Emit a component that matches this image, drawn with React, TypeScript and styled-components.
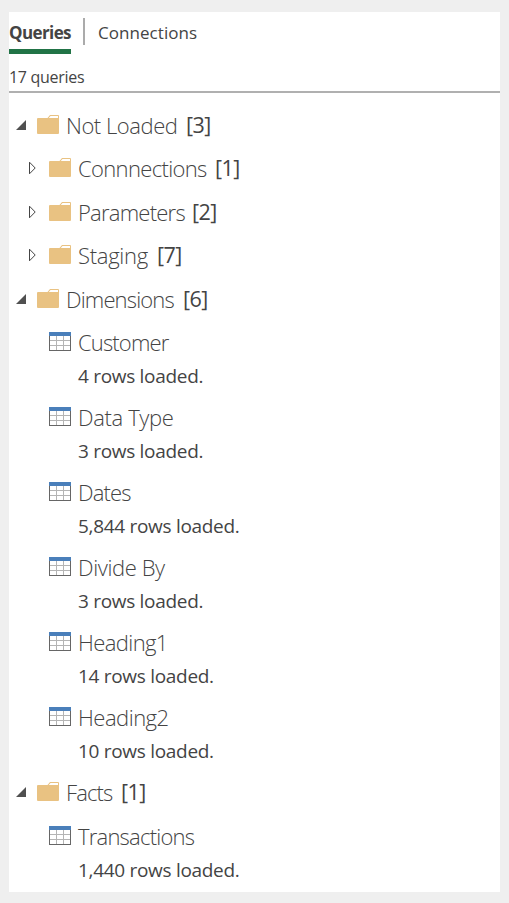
import React from "react";
import styled, { createGlobalStyle } from "styled-components";

const GlobalStyle = createGlobalStyle`
  * { box-sizing: border-box; }
  body {
    margin: 0;
    background: #efefef;
    color: #444;
    font-family: "Open Sans", "Noto Sans", sans-serif;
  }
`;

const Page = styled.div`
  height: 903px;
  padding: 12px 9px 11px;
`;

const Panel = styled.main`
  height: 880px;
  background: #fff;
`;

const Tabs = styled.nav`
  display: flex;
  height: 42px;
`;

const Tab = styled.div<{ $active?: boolean; $track: number }>`
  height: 42px;
  padding-top: 9px;
  font-size: 17px;
  line-height: 24px;
  white-space: nowrap;
  letter-spacing: ${(p) => p.$track}px;
  font-weight: ${(p) => (p.$active ? 700 : 400)};
  width: ${(p) => (p.$active ? "62px" : "auto")};
  border-bottom: ${(p) => (p.$active ? "5px solid #217346" : "0")};
`;

const Divider = styled.div`
  width: 2px;
  height: 27px;
  margin: 6px 13px 0 12px;
  background: #ababab;
`;

const Summary = styled.div`
  height: 39px;
  padding-top: 11px;
  border-bottom: 2px solid #b0b0b0;
  font-size: 16px;
  line-height: 24px;
  letter-spacing: -0.3px;
`;

const Tree = styled.div`
  padding-top: 11px;
`;

const Row = styled.div<{ $level: number; $height: number }>`
  display: flex;
  align-items: flex-start;
  height: ${(p) => p.$height}px;
  padding-left: ${(p) => 7 + p.$level * 12}px;
`;

const Toggle = styled.div`
  width: 21px;
  height: 32px;
  padding-top: 14px;
  svg { display: block; }
`;

const Icon = styled.div`
  width: 22px;
  margin: 11px 7px 0 0;
  svg { display: block; }
`;

const Title = styled.div`
  display: flex;
  height: 41px;
  line-height: 32px;
  padding-top: 5px;
  white-space: nowrap;
`;

const Name = styled.span<{ $width: number; $track: number }>`
  width: ${(p) => p.$width}px;
  font-size: 22px;
  font-weight: 300;
  letter-spacing: ${(p) => p.$track}px;
`;

const Count = styled.span`
  font-size: 21.5px;
  letter-spacing: -0.6px;
`;

const Status = styled.div`
  font-size: 19px;
  line-height: 28px;
  white-space: nowrap;
  letter-spacing: -0.3px;
`;

const Expanded = () => (
  <svg width="12" height="18" viewBox="0 0 12 18">
    <path d="M10 2V12H0Z" fill="#505050" />
  </svg>
);

const Collapsed = () => (
  <svg width="12" height="18" viewBox="0 0 12 18">
    <path d="M1.5 1.2V12.8L7.2 7Z" fill="#fff" stroke="#444" strokeWidth="1" />
  </svg>
);

const Folder = () => (
  <svg width="22" height="19" viewBox="0 0 22 19">
    <path d="M0 4Q0 3 1 3H10.5L13 0H21Q22 0 22 1V18Q22 19 21 19H1Q0 19 0 18Z" fill="#e9c282" />
    <path d="M11.7 3L13.5 1H21V3Z" fill="#fff" />
  </svg>
);

const Table = () => (
  <svg width="22" height="19" viewBox="0 0 22 19" shapeRendering="crispEdges">
    <path d="M7.5 4V18M14.5 4V18M1 8.5H21M1 13.5H21" stroke="#b4b4b4" fill="none" />
    <path d="M0 4H1V18H21V4H22V19H0Z" fill="#666" />
    <path d="M0 0H22V4H0Z" fill="#4a7fba" />
  </svg>
);

type Item = {
  name: string;
  width: number;
  track: number;
  level: number;
  height: number;
  count?: number;
  open?: boolean;
  status?: string;
};

const items: Item[] = [
  { name: "Not Loaded", width: 120, track: -0.45, level: 0, height: 43, count: 3, open: true },
  { name: "Connnections", width: 137, track: -0.66, level: 1, height: 44, count: 1 },
  { name: "Parameters", width: 114, track: -0.76, level: 1, height: 43, count: 2 },
  { name: "Staging", width: 79, track: -0.28, level: 1, height: 44, count: 7 },
  { name: "Dimensions", width: 117, track: -0.85, level: 0, height: 43, count: 6, open: true },
  { name: "Customer", width: 100, track: -0.85, level: 1, height: 75, status: "4 rows loaded." },
  { name: "Data Type", width: 100, track: -0.35, level: 1, height: 75, status: "3 rows loaded." },
  { name: "Dates", width: 100, track: -0.85, level: 1, height: 75, status: "5,844 rows loaded." },
  { name: "Divide By", width: 100, track: -0.4, level: 1, height: 75, status: "3 rows loaded." },
  { name: "Heading1", width: 100, track: -0.6, level: 1, height: 75, status: "14 rows loaded." },
  { name: "Heading2", width: 100, track: -0.5, level: 1, height: 75, status: "10 rows loaded." },
  { name: "Facts", width: 55, track: -0.85, level: 0, height: 44, count: 1, open: true },
  { name: "Transactions", width: 130, track: -0.78, level: 1, height: 75, status: "1,440 rows loaded." },
];

export default function App() {
  return (
    <Page>
      <GlobalStyle />
      <Panel>
        <Tabs>
          <Tab $active $track={-0.6}>Queries</Tab>
          <Divider />
          <Tab $track={0.05}>Connections</Tab>
        </Tabs>
        <Summary>17 queries</Summary>
        <Tree>
          {items.map((item) => (
            <Row key={item.name} $level={item.level} $height={item.height}>
              <Toggle>
                {item.count !== undefined && (item.open ? <Expanded /> : <Collapsed />)}
              </Toggle>
              <Icon>{item.status ? <Table /> : <Folder />}</Icon>
              <div>
                <Title>
                  <Name $width={item.width} $track={item.track}>{item.name}</Name>
                  {item.count !== undefined && <Count>[{item.count}]</Count>}
                </Title>
                {item.status && <Status>{item.status}</Status>}
              </div>
            </Row>
          ))}
        </Tree>
      </Panel>
    </Page>
  );
}
